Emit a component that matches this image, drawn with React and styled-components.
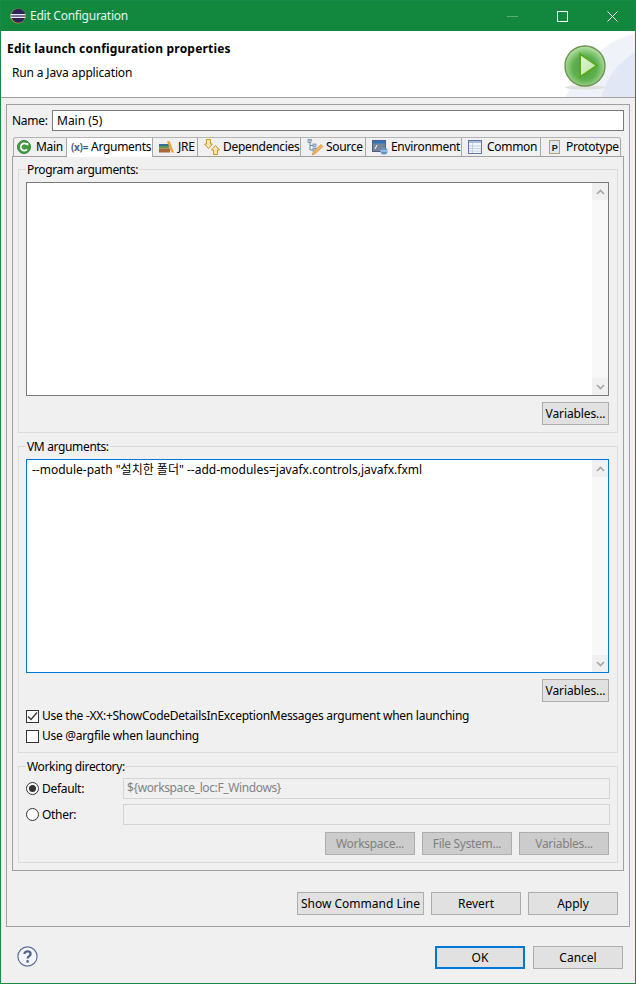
import React from 'react';
import styled, { createGlobalStyle } from 'styled-components';

const GlobalStyle = createGlobalStyle`
  html, body {
    margin: 0;
    padding: 0;
    background: #f0f0f0;
  }
  * {
    box-sizing: border-box;
  }
`;

const Window = styled.div`
  width: 636px;
  height: 984px;
  display: flex;
  flex-direction: column;
  border: 1px solid #1a8a48;
  background: #f0f0f0;
  color: #000;
  font-family: "Noto Sans", "Noto Sans CJK KR", sans-serif;
  font-size: 12px;
  line-height: 16px;
  overflow: hidden;
`;

const TitleBar = styled.div`
  height: 30px;
  flex: none;
  display: flex;
  align-items: center;
  background: #12883f;
  color: #e6f4ea;
  padding-left: 9px;
  gap: 4px;
`;

const TitleText = styled.span`
  flex: 1;
  letter-spacing: -0.25px;
`;

const WindowButton = styled.div`
  width: 46px;
  height: 30px;
  display: flex;
  align-items: center;
  justify-content: center;
`;

const Header = styled.div`
  height: 67px;
  flex: none;
  display: flex;
  justify-content: space-between;
  border-bottom: 1px solid #a0a0a0;
  padding: 10px 28px 0 6px;
  background:
    radial-gradient(circle 70px at 668px 82px, #e2e7f6 98%, transparent 100%),
    radial-gradient(circle 102px at 660px 100px, #f0f2fa 98%, transparent 100%),
    #fff;
  background-size: 635px 66px;
`;

const HeaderTitle = styled.div`
  font-weight: 700;
  letter-spacing: 0.2px;
`;

const HeaderSub = styled.div`
  margin: 8px 0 0 5px;
  letter-spacing: -0.15px;
`;

const BadgeSlot = styled.div`
  margin-top: 3px;
`;

const Body = styled.div`
  flex: none;
  padding: 6px 5px 0;
`;

const Frame = styled.div`
  border: 1px solid #a0a0a0;
  padding: 5px 5px 11px;
`;

const NameRow = styled.div`
  display: flex;
  align-items: center;
  gap: 5px;
  margin-bottom: 6px;
`;

const NameLabel = styled.span`
  width: 35px;
  letter-spacing: -0.3px;
`;

const NameInput = styled.div`
  flex: 1;
  height: 21px;
  border: 1px solid #7a7a7a;
  background: #fff;
  padding: 2px 4px 0;
`;

const TabStrip = styled.div`
  display: flex;
  align-items: flex-end;
  height: 19px;
  padding-left: 1px;
  position: relative;
  z-index: 1;
`;

const Tab = styled.div`
  width: ${(p) => p.$width}px;
  height: ${(p) => (p.$active ? 20 : 19)}px;
  flex: none;
  display: flex;
  align-items: center;
  gap: ${(p) => p.$gap}px;
  padding-left: ${(p) => p.$pad}px;
  padding-bottom: ${(p) => (p.$active ? 1 : 0)}px;
  white-space: nowrap;
  letter-spacing: -0.3px;
  background: ${(p) => (p.$active ? '#fff' : '#f0f0f0')};
  border-top: 1px solid #b4b4b4;
  border-right: 1px solid #a8a8a8;
  border-left: ${(p) => (p.$first ? '1px solid #a8a8a8' : 'none')};
  border-radius: ${(p) => (p.$first ? '3px 0 0 0' : p.$last ? '0 3px 0 0' : '0')};
  margin-bottom: ${(p) => (p.$active ? -1 : 0)}px;
`;

const TabFolder = styled.div`
  border: 1px solid #a0a0a0;
  padding: 4px 5px 7px;
  display: flex;
  flex-direction: column;
  gap: 5px;
`;

const Group = styled.fieldset`
  margin: 0;
  min-width: 0;
  border: 1px solid #dcdcdc;
  padding: 5px 8px ${(p) => p.$bottom || 6}px 7px;
`;

const GroupLabel = styled.legend`
  height: 16px;
  padding: 0 1px;
  line-height: 18px;
  letter-spacing: -0.35px;
`;

const TextBox = styled.div`
  height: 214px;
  display: flex;
  border: 1px solid ${(p) => (p.$focused ? '#0078d7' : '#7a7a7a')};
  background: #fff;
`;

const TextContent = styled.div`
  flex: 1;
  padding: 2px 5px;
  white-space: nowrap;
`;

const ScrollBar = styled.div`
  width: 16px;
  flex: none;
  display: flex;
  flex-direction: column;
  justify-content: space-between;
  background: #f8f8f8;
`;

const ScrollArrow = styled.div`
  height: 17px;
  background: #f0f0f0;
  display: flex;
  align-items: center;
  justify-content: center;
`;

const ButtonRow = styled.div`
  display: flex;
  justify-content: flex-end;
  gap: ${(p) => p.$gap || 7}px;
  margin-top: ${(p) => p.$top || 0}px;
  margin-right: ${(p) => p.$right || 0}px;
`;

const Button = styled.div`
  width: ${(p) => p.$width || 90}px;
  height: 23px;
  display: flex;
  align-items: center;
  justify-content: center;
  white-space: nowrap;
  letter-spacing: ${(p) => (p.$disabled ? -0.3 : p.$tight ? -0.1 : 0)}px;
  background: ${(p) => (p.$disabled ? '#cccccc' : '#e1e1e1')};
  color: ${(p) => (p.$disabled ? '#808080' : '#000')};
  border: ${(p) => (p.$primary ? '2px solid #0078d7' : '1px solid #adadad')};
`;

const CheckRows = styled.div`
  margin-top: 4px;
  letter-spacing: -0.27px;
`;

const CheckRow = styled.div`
  height: 20px;
  display: flex;
  align-items: center;
  gap: 3px;
`;

const CheckBox = styled.div`
  width: 13px;
  height: 13px;
  flex: none;
  border: 1px solid #333;
  background: #fff;
  display: flex;
  align-items: center;
  justify-content: center;
`;

const DirGrid = styled.div`
  display: grid;
  grid-template-columns: 97px 1fr;
  row-gap: 5px;
  margin-top: -1px;
  margin-right: -1px;
  margin-bottom: 7px;
`;

const RadioRow = styled.div`
  display: flex;
  align-items: center;
  gap: 3px;
  letter-spacing: -0.3px;
`;

const Radio = styled.div`
  width: 13px;
  height: 13px;
  flex: none;
  border: 1px solid #333;
  border-radius: 50%;
  background: #fff;
  display: flex;
  align-items: center;
  justify-content: center;

  &::after {
    content: '';
    display: ${(p) => (p.$checked ? 'block' : 'none')};
    width: 7px;
    height: 7px;
    border-radius: 50%;
    background: #333;
  }
`;

const DisabledInput = styled.div`
  height: 21px;
  border: 1px solid #bfbfbf;
  border-right-color: #fff;
  border-bottom-color: #fff;
  outline: 1px solid #d4d4d4;
  outline-offset: -1px;
  background: #f0f0f0;
  color: #838383;
  padding: 1px 3px;
  letter-spacing: -0.38px;
`;

const Footer = styled.div`
  flex: 1;
  display: flex;
  align-items: flex-start;
  justify-content: space-between;
  padding: 19px 12px 0 16px;
`;

const VarsIcon = styled.span`
  font-size: 10px;
  font-weight: 700;
  letter-spacing: -0.3px;
  color: #4d5f86;
`;

const EclipseIcon = () => (
  <svg width="16" height="16" viewBox="0 0 16 16">
    <circle cx="8" cy="8" r="7.5" fill="#c98a3a" />
    <circle cx="8.3" cy="7.7" r="7" fill="#2c2458" />
    <rect x="0.5" y="6" width="15" height="1.4" fill="#e8e8f0" />
    <rect x="0.5" y="8.6" width="15" height="1.4" fill="#e8e8f0" />
  </svg>
);

const RunBadge = () => (
  <svg width="44" height="48" viewBox="0 0 44 48" style={{ display: 'block' }}>
    <defs>
      <radialGradient id="runFill" cx="50%" cy="55%" r="55%">
        <stop offset="0%" stopColor="#47a33a" />
        <stop offset="55%" stopColor="#5fb04f" />
        <stop offset="85%" stopColor="#9ad38a" />
        <stop offset="100%" stopColor="#c0e4b4" />
      </radialGradient>
      <linearGradient id="playFill" x1="0" y1="0" x2="1" y2="1">
        <stop offset="0%" stopColor="#e6f6da" />
        <stop offset="100%" stopColor="#b5e09e" />
      </linearGradient>
    </defs>
    <ellipse cx="22" cy="43.5" rx="20" ry="2" fill="#dfe3dc" />
    <circle cx="22" cy="22" r="20" fill="url(#runFill)" stroke="#6f9150" strokeWidth="1.4" />
    <path d="M17 10 L34 21.5 L17 33 Z" fill="url(#playFill)" stroke="#5aa81f" strokeWidth="2" />
  </svg>
);

const MainIcon = () => (
  <svg width="14" height="14" viewBox="0 0 14 14">
    <circle cx="7" cy="7" r="6.5" fill="#3f9d3f" stroke="#2f7f3a" />
    <path d="M10 4.6 A3.6 3.6 0 1 0 10 9.4" fill="none" stroke="#fff" strokeWidth="1.8" />
    <path d="M8.4 3 L11.3 3 L11.3 6 Z" fill="#fff" />
  </svg>
);

const JreIcon = () => (
  <svg width="16" height="13" viewBox="0 0 16 13">
    <rect x="0" y="3" width="10" height="2" fill="#2f6f9a" />
    <rect x="0" y="5" width="10" height="2.5" fill="#5f9a4c" />
    <rect x="0" y="7.5" width="11" height="4" fill="#a9663a" />
    <path d="M8 0.5 L10.5 0 L15 11.5 L12.5 11.5 Z" fill="#e8a33a" />
  </svg>
);

const DependenciesIcon = () => (
  <svg width="16" height="16" viewBox="0 0 16 16">
    <path d="M2.5 0.5 H6.5 V5 H8.5 L4.5 9.5 L0.5 5 H2.5 Z" fill="#f8e6ae" stroke="#c9952c" />
    <path d="M9.5 15.5 H13.5 V11 H15.5 L11.5 6.5 L7.5 11 H9.5 Z" fill="#f8e6ae" stroke="#c9952c" />
  </svg>
);

const SourceIcon = () => (
  <svg width="17" height="17" viewBox="0 0 17 17">
    <path d="M2 1 H5 M3 3 V11 H6 M3 6.5 H6" fill="none" stroke="#6b86a8" />
    <rect x="1" y="0.5" width="3" height="3" fill="#b6cbe0" stroke="#6b86a8" strokeWidth="0.7" />
    <rect x="6" y="5" width="3" height="3" fill="#b6cbe0" stroke="#6b86a8" strokeWidth="0.7" />
    <rect x="6" y="9.5" width="3" height="3" fill="#b6cbe0" stroke="#6b86a8" strokeWidth="0.7" />
    <path d="M5 16 L6.5 12.5 L14 5.5 L16 7.5 L8.5 14.5 Z" fill="#eeb45c" stroke="#c88a3c" strokeWidth="0.6" />
  </svg>
);

const EnvironmentIcon = () => (
  <svg width="16" height="15" viewBox="0 0 16 15">
    <rect x="0.5" y="0.5" width="13" height="11" fill="#76849a" stroke="#4d5f80" />
    <rect x="1" y="1" width="12" height="2.5" fill="#2f74b8" />
    <path d="M3 9 L5 5" stroke="#fff" />
    <circle cx="12" cy="11" r="3.6" fill="#5f94cc" />
    <rect x="8.4" y="10.4" width="7.2" height="1" fill="#cfe0f2" />
  </svg>
);

const CommonIcon = () => (
  <svg width="14" height="14" viewBox="0 0 14 14">
    <rect x="0.5" y="0.5" width="13" height="13" fill="#f4f6fb" stroke="#5f76a4" />
    <rect x="1" y="1" width="12" height="2" fill="#a9bcdc" />
    <path d="M1 6 H13 M1 8.5 H13 M1 11 H13" stroke="#c4cfe4" />
    <path d="M4.5 3 V13" stroke="#c4cfe4" />
  </svg>
);

const PrototypeIcon = () => (
  <svg width="11" height="14" viewBox="0 0 11 14">
    <rect x="0.5" y="0.5" width="10" height="13" fill="#dce7f7" stroke="#b3a36a" />
    <text x="5.5" y="10.5" textAnchor="middle" fontSize="9" fontWeight="700" fontFamily="Liberation Sans" fill="#222">P</text>
  </svg>
);

const HelpIcon = () => (
  <svg width="21" height="21" viewBox="0 0 21 21">
    <circle cx="10.5" cy="10.5" r="9.6" fill="#f4f5f8" stroke="#5f7297" strokeWidth="1.2" />
    <path d="M7.4 8 C7.4 4.6 13.6 4.6 13.6 8 C13.6 10.2 10.6 10 10.6 12.6" fill="none" stroke="#4f6288" strokeWidth="2.2" />
    <circle cx="10.6" cy="15.4" r="1.3" fill="#4f6288" />
  </svg>
);

const Chevron = ({ up }) => (
  <svg width="9" height="6" viewBox="0 0 9 6">
    <path d={up ? 'M1 5 L4.5 1.5 L8 5' : 'M1 1 L4.5 4.5 L8 1'} fill="none" stroke="#a6a6a6" strokeWidth="1.6" />
  </svg>
);

const Scroller = () => (
  <ScrollBar>
    <ScrollArrow><Chevron up /></ScrollArrow>
    <ScrollArrow><Chevron /></ScrollArrow>
  </ScrollBar>
);

const tabs = [
  { label: 'Main', width: 54, icon: <MainIcon />, first: true, pad: 3, gap: 5 },
  { label: 'Arguments', width: 86, icon: <VarsIcon>(x)=</VarsIcon>, active: true, pad: 4, gap: 3 },
  { label: 'JRE', width: 45, icon: <JreIcon />, pad: 6, gap: 3 },
  { label: 'Dependencies', width: 103, icon: <DependenciesIcon />, pad: 6, gap: 3 },
  { label: 'Source', width: 65, icon: <SourceIcon />, pad: 6, gap: 2 },
  { label: 'Environment', width: 96, icon: <EnvironmentIcon />, pad: 6, gap: 3 },
  { label: 'Common', width: 79, icon: <CommonIcon />, pad: 6, gap: 5 },
  { label: 'Prototype', width: 80, icon: <PrototypeIcon />, pad: 8, gap: 6, last: true },
];

export default function App() {
  return (
    <>
      <GlobalStyle />
      <Window>
        <TitleBar>
          <EclipseIcon />
          <TitleText>Edit Configuration</TitleText>
          <WindowButton>
            <svg width="11" height="1" viewBox="0 0 11 1"><rect width="11" height="1" fill="#5fa87a" /></svg>
          </WindowButton>
          <WindowButton>
            <svg width="11" height="11" viewBox="0 0 11 11"><rect x="0.5" y="0.5" width="10" height="10" fill="none" stroke="#fff" /></svg>
          </WindowButton>
          <WindowButton>
            <svg width="11" height="11" viewBox="0 0 11 11"><path d="M0.5 0.5 L10.5 10.5 M10.5 0.5 L0.5 10.5" stroke="#fff" /></svg>
          </WindowButton>
        </TitleBar>

        <Header>
          <div>
            <HeaderTitle>Edit launch configuration properties</HeaderTitle>
            <HeaderSub>Run a Java application</HeaderSub>
          </div>
          <BadgeSlot>
            <RunBadge />
          </BadgeSlot>
        </Header>

        <Body>
          <Frame>
            <NameRow>
              <NameLabel>Name:</NameLabel>
              <NameInput>Main (5)</NameInput>
            </NameRow>

            <TabStrip>
              {tabs.map((t) => (
                <Tab
                  key={t.label}
                  $width={t.width}
                  $active={t.active}
                  $first={t.first}
                  $last={t.last}
                  $gap={t.gap}
                  $pad={t.pad}
                >
                  {t.icon}
                  <span>{t.label}</span>
                </Tab>
              ))}
            </TabStrip>

            <TabFolder>
              <Group $bottom={7}>
                <GroupLabel>Program arguments:</GroupLabel>
                <TextBox>
                  <TextContent />
                  <Scroller />
                </TextBox>
                <ButtonRow $top={6}>
                  <Button $width={67} $tight>Variables...</Button>
                </ButtonRow>
              </Group>

              <Group>
                <GroupLabel>VM arguments:</GroupLabel>
                <TextBox $focused>
                  <TextContent>--module-path "설치한 폴더" --add-modules=javafx.controls,javafx.fxml</TextContent>
                  <Scroller />
                </TextBox>
                <ButtonRow $top={6}>
                  <Button $width={67} $tight>Variables...</Button>
                </ButtonRow>
                <CheckRows>
                  <CheckRow>
                    <CheckBox>
                      <svg width="11" height="11" viewBox="0 0 11 11">
                        <path d="M1 5.5 L4 8.5 L10 1.5" fill="none" stroke="#333" strokeWidth="1.3" />
                      </svg>
                    </CheckBox>
                    <span>Use the -XX:+ShowCodeDetailsInExceptionMessages argument when launching</span>
                  </CheckRow>
                  <CheckRow>
                    <CheckBox />
                    <span>Use @argfile when launching</span>
                  </CheckRow>
                </CheckRows>
              </Group>

              <Group $bottom={7}>
                <GroupLabel>Working directory:</GroupLabel>
                <DirGrid>
                  <RadioRow>
                    <Radio $checked />
                    <span>Default:</span>
                  </RadioRow>
                  <DisabledInput>{'${workspace_loc:F_Windows}'}</DisabledInput>
                  <RadioRow>
                    <Radio />
                    <span>Other:</span>
                  </RadioRow>
                  <DisabledInput />
                </DirGrid>
                <ButtonRow>
                  <Button $disabled>Workspace...</Button>
                  <Button $disabled>File System...</Button>
                  <Button $disabled>Variables...</Button>
                </ButtonRow>
              </Group>
            </TabFolder>

            <ButtonRow $top={21} $right={6}>
              <Button $width={127}>Show Command Line</Button>
              <Button>Revert</Button>
              <Button>Apply</Button>
            </ButtonRow>
          </Frame>
        </Body>

        <Footer>
          <HelpIcon />
          <ButtonRow $gap={8}>
            <Button $primary>OK</Button>
            <Button>Cancel</Button>
          </ButtonRow>
        </Footer>
      </Window>
    </>
  );
}
